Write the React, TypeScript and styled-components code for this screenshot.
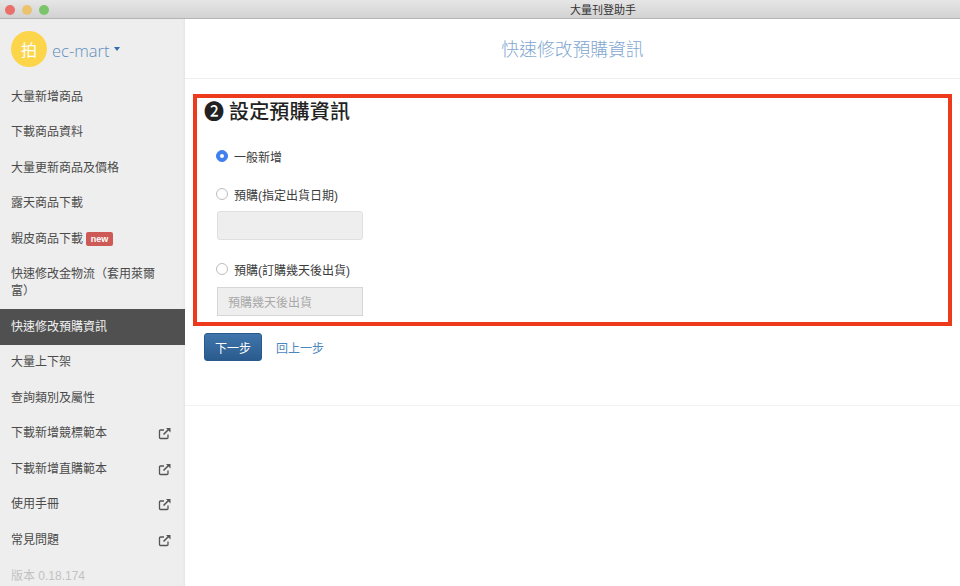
import React from "react";
import styled, { createGlobalStyle } from "styled-components";

const Global = createGlobalStyle`
  html, body { margin: 0; padding: 0; background: #fff; }
  * { box-sizing: border-box; }
  body { font-family: "Liberation Sans", "Noto Sans CJK TC", sans-serif; }
`;

const Window = styled.div`
  width: 960px;
  height: 586px;
  display: flex;
  flex-direction: column;
  overflow: hidden;
`;

const TitleBar = styled.div`
  height: 19px;
  flex: none;
  position: relative;
  display: flex;
  align-items: center;
  justify-content: center;
  padding-left: 246px;
  background: linear-gradient(#e6e6e6, #d2d2d2);
  border-bottom: 1px solid #b4b4b4;
  font-size: 11px;
  color: #333;
`;

const Lights = styled.div`
  position: absolute;
  left: 5px;
  top: 5px;
  display: flex;
  gap: 7px;
`;

const Light = styled.span<{ $c: string }>`
  width: 10px;
  height: 10px;
  border-radius: 50%;
  background: ${(p) => p.$c};
`;

const Body = styled.div`
  flex: 1;
  display: flex;
  min-height: 0;
`;

const Sidebar = styled.nav`
  width: 185px;
  flex: none;
  background: #eeeeee;
  box-shadow: inset -2px 0 2px -1px #e4e4e4;
`;

const Brand = styled.div`
  height: 60.25px;
  padding: 12px 11px 0;
  display: flex;
  align-items: flex-start;
  gap: 5px;
`;

const Avatar = styled.div`
  width: 36px;
  height: 36px;
  border-radius: 50%;
  background: #fdd54a;
  color: #fff;
  font-size: 16px;
  display: flex;
  align-items: center;
  justify-content: center;
`;

const BrandName = styled.div`
  height: 38px;
  display: flex;
  align-items: center;
  gap: 5px;
  font-family: "Open Sans", "Liberation Sans", sans-serif;
  font-weight: 300;
  font-size: 16.5px;
  color: #5f8fc0;
`;

const Caret = styled.span`
  width: 0;
  height: 0;
  margin-top: -2px;
  border-left: 3.5px solid transparent;
  border-right: 3.5px solid transparent;
  border-top: 4px solid #2f6db0;
`;

const NavList = styled.div`
  display: flex;
  flex-direction: column;
`;

const NavItem = styled.div<{ $active?: boolean }>`
  min-height: 35.5px;
  padding: 9.5px 14px 9px 11px;
  display: flex;
  align-items: center;
  font-size: 12px;
  line-height: 17px;
  color: ${(p) => (p.$active ? "#f2f2f2" : "#4a4a4a")};
  background: ${(p) => (p.$active ? "#505050" : "transparent")};
`;

const NavLabel = styled.span`
  flex: 1;
`;

const NewBadge = styled.span`
  margin-left: 3px;
  margin-right: auto;
  width: 27px;
  height: 14px;
  border-radius: 2px;
  background: #cd5a57;
  color: #fff;
  font-size: 9px;
  font-weight: 700;
  line-height: 14px;
  text-align: center;
`;

const Version = styled.div`
  padding: 10px 11px;
  font-size: 12px;
  line-height: 17px;
  color: #c2c2c2;
`;

const Main = styled.main`
  flex: 1;
  min-width: 0;
  background: #fff;
`;

const Header = styled.header`
  height: 60px;
  padding-bottom: 2px;
  border-bottom: 1px solid #eeeeee;
  display: flex;
  align-items: center;
  justify-content: center;
  font-size: 17.8px;
  font-weight: 300;
  color: #7fa6d0;
`;

const Content = styled.div`
  padding: 15px 8px 0;
`;

const Marked = styled.section`
  height: 232px;
  border: 4px solid #ee3a1c;
  padding: 0 7px;
`;

const Heading = styled.h2`
  margin: 0;
  padding-top: 1px;
  height: 27px;
  font-size: 20px;
  font-weight: 500;
  letter-spacing: 0.2px;
  word-spacing: -1px;
  line-height: 26px;
  color: #222;
`;

const Form = styled.div`
  padding: 21px 0 0 12px;
  display: flex;
  flex-direction: column;
`;

const RadioRow = styled.label<{ $gap: number }>`
  height: 20px;
  margin-bottom: ${(p) => p.$gap}px;
  display: flex;
  align-items: center;
  gap: 6px;
  font-size: 12px;
  color: #3c3c3c;
`;

const Radio = styled.span<{ $on?: boolean }>`
  width: 12px;
  height: 12px;
  border-radius: 50%;
  background: ${(p) => (p.$on ? "#3f7fee" : "#fff")};
  border: 1px solid ${(p) => (p.$on ? "#3f7fee" : "#bdbdbd")};
  display: flex;
  align-items: center;
  justify-content: center;
  &::after {
    content: "";
    display: ${(p) => (p.$on ? "block" : "none")};
    width: 4px;
    height: 4px;
    border-radius: 50%;
    background: #fff;
  }
`;

const Field = styled.div<{ $square?: boolean; $gap: number }>`
  width: 146px;
  height: 29px;
  margin-left: 1px;
  margin-bottom: ${(p) => p.$gap}px;
  padding: 0 10px;
  display: flex;
  align-items: center;
  background: #eeeeee;
  border: 1px solid ${(p) => (p.$square ? "#d6d6d6" : "#dfdfdf")};
  border-radius: ${(p) => (p.$square ? "0" : "3px")};
  font-size: 12px;
  color: #a8a8a8;
`;

const Actions = styled.div`
  padding: 7px 11px 0;
  display: flex;
  align-items: center;
  gap: 14px;
`;

const PrimaryButton = styled.button`
  width: 58px;
  height: 28px;
  padding: 0;
  border: 1px solid #2a5a8c;
  border-radius: 3px;
  background: linear-gradient(#3f76ab, #2b5b8e);
  color: #fff;
  font: inherit;
  font-size: 12px;
`;

const BackLink = styled.a`
  font-size: 12px;
  color: #4a86c0;
`;

const Rule = styled.hr`
  margin: 44px -8px 0;
  border: 0;
  border-top: 1px solid #f2f2f2;
`;

const LinkIcon = () => (
  <svg width="13" height="13" viewBox="0 0 13 13" fill="none" stroke="#555" strokeWidth="1.3">
    <path d="M10 7.5V10.5a1 1 0 0 1-1 1H2.5a1 1 0 0 1-1-1V4a1 1 0 0 1 1-1H6" />
    <path d="M5.5 7.5L11.5 1.5" strokeWidth="1.6" />
    <path d="M8 1h4.5v4.5z" fill="#555" stroke="none" />
  </svg>
);

const items: { label: string; badge?: boolean; active?: boolean; external?: boolean }[] = [
  { label: "大量新增商品" },
  { label: "下載商品資料" },
  { label: "大量更新商品及價格" },
  { label: "露天商品下載" },
  { label: "蝦皮商品下載", badge: true },
  { label: "快速修改金物流（套用萊爾富）" },
  { label: "快速修改預購資訊", active: true },
  { label: "大量上下架" },
  { label: "查詢類別及屬性" },
  { label: "下載新增競標範本", external: true },
  { label: "下載新增直購範本", external: true },
  { label: "使用手冊", external: true },
  { label: "常見問題", external: true },
];

export default function App() {
  return (
    <Window>
      <Global />
      <TitleBar>
        <Lights>
          <Light $c="#e9706a" />
          <Light $c="#ebc26e" />
          <Light $c="#7cc46a" />
        </Lights>
        大量刊登助手
      </TitleBar>
      <Body>
        <Sidebar>
          <Brand>
            <Avatar>拍</Avatar>
            <BrandName>
              ec-mart
              <Caret />
            </BrandName>
          </Brand>
          <NavList>
            {items.map((it) =>
              it.badge ? (
                <NavItem key={it.label}>
                  {it.label}
                  <NewBadge>new</NewBadge>
                </NavItem>
              ) : (
                <NavItem key={it.label} $active={it.active}>
                  <NavLabel>{it.label}</NavLabel>
                  {it.external && <LinkIcon />}
                </NavItem>
              )
            )}
          </NavList>
          <Version>版本 0.18.174</Version>
        </Sidebar>
        <Main>
          <Header>快速修改預購資訊</Header>
          <Content>
            <Marked>
              <Heading>❷ 設定預購資訊</Heading>
              <Form>
                <RadioRow $gap={18}>
                  <Radio $on />
                  一般新增
                </RadioRow>
                <RadioRow $gap={7}>
                  <Radio />
                  預購(指定出貨日期)
                </RadioRow>
                <Field $gap={19} />
                <RadioRow $gap={8}>
                  <Radio />
                  預購(訂購幾天後出貨)
                </RadioRow>
                <Field $square $gap={0}>預購幾天後出貨</Field>
              </Form>
            </Marked>
            <Actions>
              <PrimaryButton>下一步</PrimaryButton>
              <BackLink>回上一步</BackLink>
            </Actions>
            <Rule />
          </Content>
        </Main>
      </Body>
    </Window>
  );
}
